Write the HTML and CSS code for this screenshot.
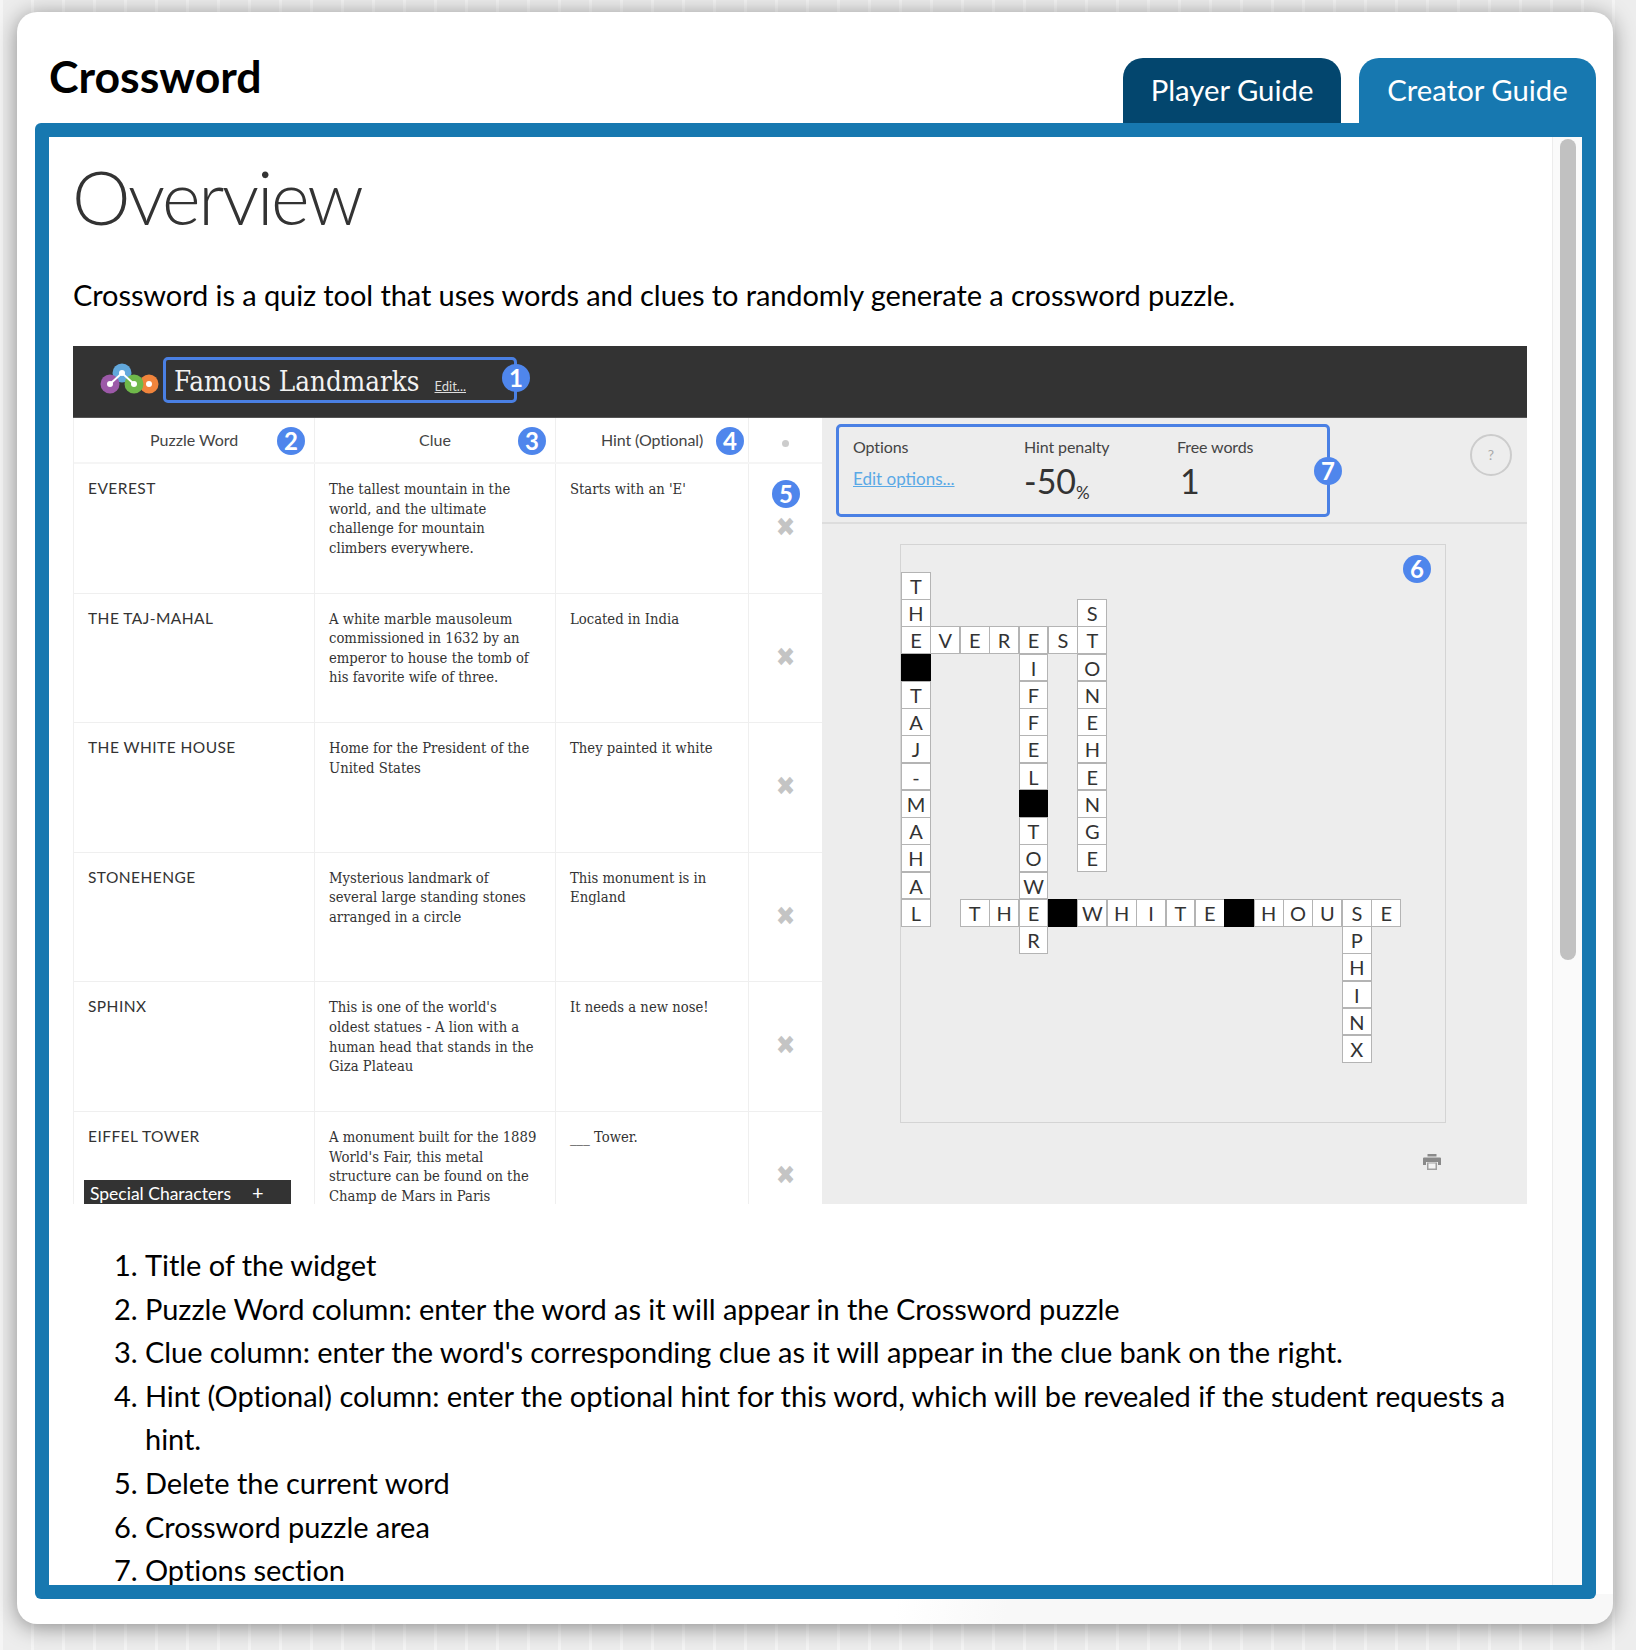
FILE: index.html
```html
<!DOCTYPE html>
<html>

<head>
    <title>Crossword Guide</title>
    <link rel="stylesheet" href="styles.css">
</head>

<body>
    <div class="card">
        <header class="top">
            <h1>Crossword</h1>
            <nav class="tabs">
                <a class="tab tab-dark">Player Guide</a>
                <a class="tab">Creator Guide</a>
            </nav>
        </header>
        <div class="frame">
            <main class="doc">
                <div class="doc-body">
                    <h2>Overview</h2>
                    <p class="lead">Crossword is a quiz tool that uses words and clues to randomly generate a crossword puzzle.</p>

                    <div class="shot">
                        <div class="shot-bar">
                            <svg class="logo" viewBox="0 0 62 36" width="62" height="36">
                                <circle cx="24" cy="13" r="9.5" fill="#62a8dc" />
                                <circle cx="51" cy="24" r="9.5" fill="#f0843c" />
                                <circle cx="12" cy="24" r="9.5" fill="#9c59a8" />
                                <circle cx="36" cy="24" r="9.5" fill="#6fb84a" />
                                <path d="M12 24 L24 13 L36 24" stroke="#fff" stroke-width="2" fill="none" />
                                <circle cx="24" cy="13" r="3" fill="#fff" />
                                <circle cx="12" cy="24" r="3" fill="#fff" />
                                <circle cx="36" cy="24" r="3" fill="#fff" />
                                <circle cx="51" cy="24" r="3" fill="#fff" />
                            </svg>
                            <div class="title-box"><span class="title">Famous Landmarks</span><a class="title-edit">Edit...</a></div>
                        </div>
                        <div class="shot-main">
                            <div class="table">
                                <div class="row row-head">
                                    <div class="cell col-word">Puzzle Word</div>
                                    <div class="cell col-clue">Clue</div>
                                    <div class="cell col-hint">Hint (Optional)</div>
                                    <div class="cell col-del"><i class="dot"></i></div>
                                </div>
                                <div class="row">
                                    <div class="cell col-word">EVEREST</div>
                                    <div class="cell col-clue">The tallest mountain in the world, and the ultimate challenge for mountain climbers everywhere.</div>
                                    <div class="cell col-hint">Starts with an 'E'</div>
                                    <div class="cell col-del">&#x2716;</div>
                                </div>
                                <div class="row">
                                    <div class="cell col-word">THE TAJ-MAHAL</div>
                                    <div class="cell col-clue">A white marble mausoleum commissioned in 1632 by an emperor to house the tomb of his favorite wife of three.</div>
                                    <div class="cell col-hint">Located in India</div>
                                    <div class="cell col-del">&#x2716;</div>
                                </div>
                                <div class="row">
                                    <div class="cell col-word">THE WHITE HOUSE</div>
                                    <div class="cell col-clue">Home for the President of the United States</div>
                                    <div class="cell col-hint">They painted it white</div>
                                    <div class="cell col-del">&#x2716;</div>
                                </div>
                                <div class="row">
                                    <div class="cell col-word">STONEHENGE</div>
                                    <div class="cell col-clue">Mysterious landmark of several large standing stones arranged in a circle</div>
                                    <div class="cell col-hint">This monument is in England</div>
                                    <div class="cell col-del">&#x2716;</div>
                                </div>
                                <div class="row">
                                    <div class="cell col-word">SPHINX</div>
                                    <div class="cell col-clue">This is one of the world's oldest statues - A lion with a human head that stands in the Giza Plateau</div>
                                    <div class="cell col-hint">It needs a new nose!</div>
                                    <div class="cell col-del">&#x2716;</div>
                                </div>
                                <div class="row">
                                    <div class="cell col-word">EIFFEL TOWER</div>
                                    <div class="cell col-clue">A monument built for the 1889 World's Fair, this metal structure can be found on the Champ de Mars in Paris</div>
                                    <div class="cell col-hint">___ Tower.</div>
                                    <div class="cell col-del">&#x2716;</div>
                                </div>
                                <div class="special">Special Characters<span>+</span></div>
                            </div>
                            <div class="panel">
                                <div class="panel-top">
                                    <div class="options">
                                        <div class="opt opt-first">
                                            <span class="opt-label">Options</span>
                                            <a class="opt-link">Edit options...</a>
                                        </div>
                                        <div class="opt opt-hint">
                                            <span class="opt-label">Hint penalty</span>
                                            <span class="opt-val">-50<small>%</small></span>
                                        </div>
                                        <div class="opt">
                                            <span class="opt-label">Free words</span>
                                            <span class="opt-val opt-one">1</span>
                                        </div>
                                    </div>
                                    <div class="help">?</div>
                                </div>
                                <div class="puzzle">
                                    <div class="grid" id="grid"></div>
                                </div>
                                <svg class="printer" viewBox="0 0 18 16" width="18" height="16">
                                    <path d="M4.5 0h9v2.5h-9z" fill="#8a8a8a" />
                                    <path d="M1 3.5h16a1 1 0 0 1 1 1v6.5h-3V8H3v3H0V4.5a1 1 0 0 1 1-1z" fill="#8a8a8a" />
                                    <path d="M4 8.5h10V16H4z" fill="#a0a0a0" />
                                    <path d="M5.5 9.5h7v5h-7z" fill="#f4f4f4" />
                                </svg>
                            </div>
                        </div>
                        <b class="badge b1">1</b>
                        <b class="badge b2">2</b>
                        <b class="badge b3">3</b>
                        <b class="badge b4">4</b>
                        <b class="badge b5">5</b>
                        <b class="badge b6">6</b>
                        <b class="badge b7">7</b>
                    </div>

                    <ol class="steps">
                        <li>Title of the widget</li>
                        <li>Puzzle Word column: enter the word as it will appear in the Crossword puzzle</li>
                        <li>Clue column: enter the word's corresponding clue as it will appear in the clue bank on the right.</li>
                        <li>Hint (Optional) column: enter the optional hint for this word, which will be revealed if the student requests a hint.</li>
                        <li>Delete the current word</li>
                        <li>Crossword puzzle area</li>
                        <li>Options section</li>
                    </ol>
                </div>
                <div class="scroll"><div class="thumb"></div></div>
            </main>
        </div>
    </div>
    <script src="grid.js"></script>
</body>

</html>
```

FILE: grid.js
```js
// words as row, column, direction, letters; a space is a black square
var words = [
    [1, 1, 'down', 'THE TAJ-MAHAL'],
    [3, 1, 'across', 'EVEREST'],
    [2, 7, 'down', 'STONEHENGE'],
    [3, 5, 'down', 'EIFFEL TOWER'],
    [13, 3, 'across', 'THE WHITE HOUSE'],
    [13, 16, 'down', 'SPHINX']
];

var grid = document.getElementById('grid');
var seen = {};

words.forEach(function (word) {
    for (var i = 0; i < word[3].length; i++) {
        var row = word[2] === 'down' ? word[0] + i : word[0];
        var col = word[2] === 'across' ? word[1] + i : word[1];
        if (seen[row + '/' + col]) continue;
        seen[row + '/' + col] = true;

        var box = document.createElement('div');
        box.className = word[3][i] === ' ' ? 'box box-black' : 'box';
        box.textContent = word[3][i];
        box.style.gridArea = row + '/' + col;
        grid.appendChild(box);
    }
});
```

FILE: styles.css
```css
* {
    margin: 0;
    box-sizing: border-box;
}

body {
    margin: 0;
    height: 1650px;
    overflow: hidden;
    padding: 12px 23px 0 17px;
    font-family: "Lato", sans-serif;
    background-color: #ededed;
    background-image: repeating-linear-gradient(90deg, #f5f5f5 0, #f5f5f5 3px, #ededed 3px, #ededed 31px);
}

.card {
    height: 1612px;
    background-color: #fff;
    background-image: linear-gradient(100deg, #fff 55%, #f8f8f8 62%);
    background-size: 100% 30px;
    background-position: bottom;
    background-repeat: no-repeat;
    border-radius: 20px;
    box-shadow: 0 3px 22px rgba(0, 0, 0, 0.42);
    padding: 0 17px 25px 18px;
    display: flex;
    flex-direction: column;
}

.top {
    height: 111px;
    display: flex;
    justify-content: space-between;
    align-items: flex-end;
    flex: none;
}

h1 {
    font-size: 44.6px;
    font-weight: 700;
    color: #000;
    line-height: 54px;
    margin: 0 0 20px 14px;
}

.tabs {
    display: flex;
    gap: 18px;
}

.tab {
    height: 65px;
    width: 237px;
    background-color: #1778b0;
    color: #fff;
    font-size: 29.3px;
    text-align: center;
    line-height: 64px;
    border-radius: 20px 20px 0 0;
}

.tab-dark {
    width: 218px;
    background-color: #03466e;
}

.frame {
    flex: 1;
    min-height: 0;
    background-color: #1778b0;
    border-radius: 6px 0 6px 6px;
    padding: 14px;
}

.doc {
    height: 100%;
    display: flex;
    background-color: #fff;
    overflow: hidden;
}

.doc-body {
    flex: 1;
    min-width: 0;
    padding: 0 24px;
    overflow: hidden;
}

.scroll {
    flex: none;
    width: 30px;
    background-color: #fafafa;
    border-left: 1px solid #ececec;
    padding: 2px 7px;
}

.thumb {
    width: 16px;
    height: 821px;
    background-color: #c1c1c1;
    border-radius: 8px;
}

h2 {
    font-size: 74px;
    font-weight: 300;
    letter-spacing: -2.3px;
    color: #333;
    line-height: 86px;
    padding-top: 17px;
    margin-left: -1px;
}

.lead {
    font-size: 29px;
    letter-spacing: -0.09px;
    color: #000;
    line-height: 44px;
    margin-top: 33px;
}

.shot {
    position: relative;
    width: 1454px;
    margin-top: 29px;
}

.shot-bar {
    height: 72px;
    background-color: #333;
    border-bottom: 1px solid #555;
    display: flex;
    align-items: flex-start;
    padding: 11px 0 0 25px;
}

.logo {
    flex: none;
    margin-top: 3px;
}

.title-box {
    width: 354px;
    height: 46px;
    border: 3px solid #4a80e4;
    border-radius: 5px;
    margin-left: 3px;
    color: #fff;
    display: flex;
    align-items: baseline;
    padding: 2px 0 0 8px;
    white-space: nowrap;
}

.title {
    font-family: "DejaVu Serif", serif;
    font-stretch: condensed;
    font-weight: 400;
    font-size: 27.5px;
    line-height: 38px;
    color: #f2f2f2;
}

.title-edit {
    font-size: 13px;
    color: #ddd;
    text-decoration: underline;
    margin-left: 15px;
}

.shot-main {
    height: 786px;
    display: flex;
    overflow: hidden;
}

.table {
    position: relative;
    flex: none;
    width: 749px;
    background-color: #fff;
    border-left: 1px solid #f0f0f0;
    overflow: hidden;
}

.row {
    display: flex;
    height: 129.6px;
    border-bottom: 1px solid #efefef;
}

.row-head {
    height: 46px;
    border-bottom-width: 2px;
    border-bottom-color: #f5f5f5;
}

.cell {
    border-right: 1px solid #efefef;
    padding: 15px 14px;
    font-family: "DejaVu Serif", serif;
    font-stretch: condensed;
    font-size: 14.7px;
    line-height: 19.6px;
    color: #333;
}

.col-word {
    width: 241px;
    font-family: "Lato", sans-serif;
    font-stretch: normal;
    font-size: 15.5px;
    letter-spacing: 0.45px;
    padding-left: 14px;
    padding-top: 15px;
}

.col-clue {
    width: 241px;
    padding-right: 16px;
}

.col-hint {
    width: 193px;
}

.col-del {
    width: 73px;
    border-right: 0;
    padding: 0;
    text-align: center;
    color: #c4c4c4;
    font-family: "DejaVu Sans", sans-serif;
    font-size: 26px;
    line-height: 20px;
    padding-top: 53px;
}

.row-head .cell {
    font-family: "Lato", sans-serif;
    font-stretch: normal;
    font-size: 16px;
    letter-spacing: 0;
    text-align: left;
    padding: 12px 0 0;
    color: #444;
}

.row-head .col-word {
    padding-left: 76px;
}

.row-head .col-clue {
    padding-left: 104px;
}

.row-head .col-hint {
    padding-left: 45px;
    letter-spacing: -0.1px;
}

.dot {
    display: block;
    width: 7px;
    height: 7px;
    border-radius: 50%;
    background-color: #ccc;
    margin: 10px auto 0;
}

.special {
    position: absolute;
    left: 10px;
    bottom: 0;
    width: 207px;
    height: 24px;
    background-color: #333;
    color: #fff;
    font-size: 17.5px;
    line-height: 22px;
    padding: 2px 0 0 6px;
}

.special span {
    margin-left: 21px;
    font-size: 20px;
    line-height: 1;
}

.panel {
    position: relative;
    flex: 1;
    background-color: #ededed;
    padding-left: 78px;
}

.panel-top {
    height: 106px;
    margin-left: -78px;
    border-bottom: 2px solid #ddd;
    padding: 6px 0 0 14px;
}

.options {
    width: 494px;
    height: 93px;
    border: 3px solid #4a80e4;
    border-radius: 5px;
    display: flex;
    padding: 10px 14px;
}

.opt {
    display: flex;
    flex-direction: column;
    color: #444;
}

.opt-first {
    width: 171px;
}

.opt-hint {
    width: 153px;
}

.opt-label {
    font-size: 16px;
    letter-spacing: -0.1px;
    line-height: 20px;
}

.opt-link {
    font-size: 17px;
    color: #5aa9e6;
    text-decoration: underline;
    margin-top: 12px;
    line-height: 20px;
}

.opt-val {
    font-size: 34px;
    line-height: 40px;
    margin-top: 4px;
    color: #333;
}

.opt-val small {
    font-size: 17px;
    margin-left: 0;
    vertical-align: -5px;
    line-height: 1;
}

.opt-one {
    padding-left: 3px;
}

.help {
    position: absolute;
    left: 648px;
    top: 16px;
    width: 42px;
    height: 42px;
    border: 2px solid #ccc;
    border-radius: 50%;
    text-align: center;
    color: #aaa;
    font-size: 14px;
    line-height: 38px;
}

.puzzle {
    width: 546px;
    height: 579px;
    margin-top: 20px;
    border: 1px solid #d4d4d4;
    padding: 27px 0 0;
}

.grid {
    display: grid;
    grid-template-columns: repeat(17, 29.4px);
    grid-auto-rows: 27.24px;
}

.box {
    background-color: #fff;
    border: 1px solid #b4b4b4;
    margin: 0 -0.5px -0.5px 0;
    color: #333;
    font-size: 20px;
    text-align: center;
    line-height: 26px;
}

.box-black {
    background-color: #000;
    border-color: #000;
}

.printer {
    position: absolute;
    left: 601px;
    top: 736px;
}

.badge {
    position: absolute;
    width: 28px;
    height: 28px;
    border-radius: 50%;
    background-color: #4f86ec;
    color: #fff;
    font-size: 24px;
    font-weight: 700;
    line-height: 28px;
    text-align: center;
}

.b1 { left: 429px; top: 18px; }
.b2 { left: 204px; top: 81px; }
.b3 { left: 445px; top: 81px; }
.b4 { left: 643px; top: 81px; }
.b5 { left: 699px; top: 134px; }
.b6 { left: 1330px; top: 209px; }
.b7 { left: 1241px; top: 111px; }

.steps {
    font-size: 29px;
    letter-spacing: -0.05px;
    color: #000;
    line-height: 43.6px;
    margin-top: 39px;
    padding-left: 72px;
}
```
